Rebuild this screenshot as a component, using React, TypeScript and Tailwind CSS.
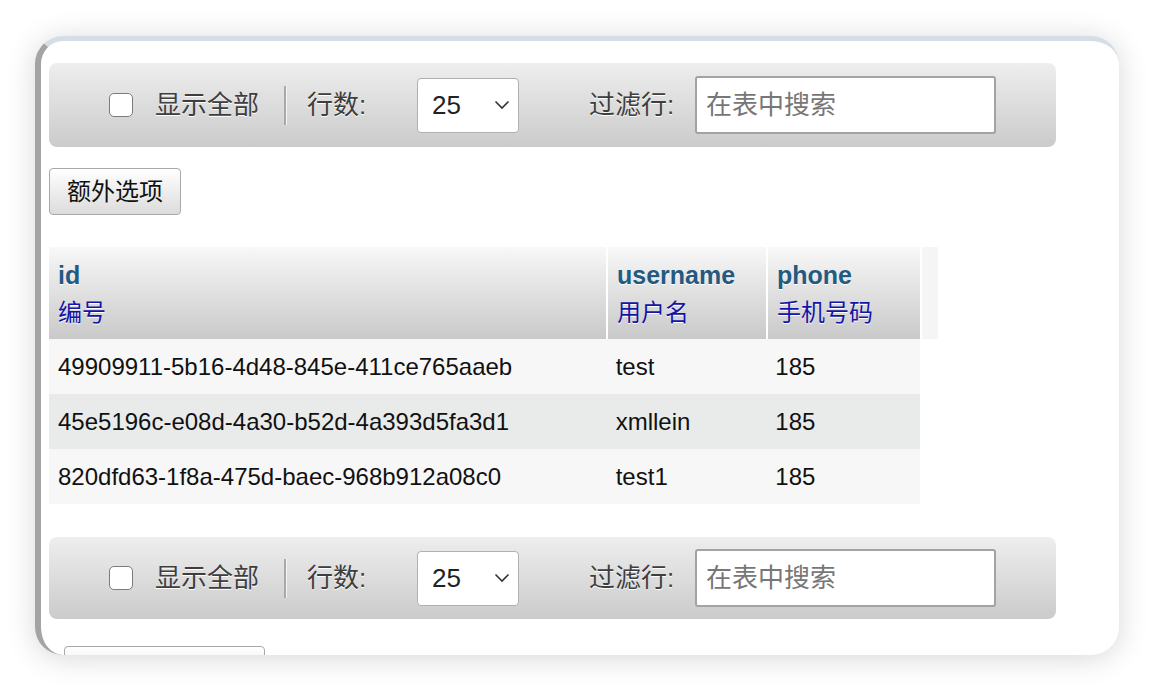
import React from "react";

const font = { fontFamily: '"Liberation Sans", "Noto Sans CJK SC", sans-serif' };

const rows = [
  ["49909911-5b16-4d48-845e-411ce765aaeb", "test", "185"],
  ["45e5196c-e08d-4a30-b52d-4a393d5fa3d1", "xmllein", "185"],
  ["820dfd63-1f8a-475d-baec-968b912a08c0", "test1", "185"],
];

const cols = [
  { name: "id", label: "编号", w: "w-[559px]" },
  { name: "username", label: "用户名", w: "w-[160px]" },
  { name: "phone", label: "手机号码", w: "w-[154px]" },
];

function Chevron() {
  return (
    <svg width="16" height="10" viewBox="0 0 16 10" className="text-[#333]">
      <polyline points="1.5,1.5 8,8 14.5,1.5" fill="none" stroke="currentColor" strokeWidth="1.6" />
    </svg>
  );
}

function Toolbar({ h }: { h: string }) {
  return (
    <div
      className={`flex w-[1007px] ${h} items-center rounded-[8px] bg-gradient-to-b from-[#eeeeee] to-[#cbcbcb] pl-[60px] text-[26px] text-[#3e3e3e] [text-shadow:0_1px_0_#fff]`}
    >
      <span className="h-[24px] w-[24px] shrink-0 rounded-[5px] border-[1.5px] border-[#7c7c7c] bg-white" />
      <span className="ml-[22px] w-[129px] leading-none">显示全部</span>
      <span className="h-[39px] w-[2px] bg-[#a9a9a9] shadow-[1px_0_0_#f4f4f4]" />
      <span className="ml-[21px] w-[110px] leading-none">行数:</span>
      <div className="flex h-[55px] w-[102px] items-center justify-between rounded-[4px] border-[1.5px] border-[#b0b0b0] bg-white pl-[14px] pr-[8px] text-[#222] [text-shadow:none]">
        <span className="leading-none">25</span>
        <Chevron />
      </div>
      <span className="ml-[70px] w-[106px] leading-none">过滤行:</span>
      <div className="flex h-[58px] w-[301px] items-center rounded-[3px] border-2 border-[#a3a3a3] bg-white pl-[9px] text-[#777] [text-shadow:none]">
        <span className="leading-none">在表中搜索</span>
      </div>
    </div>
  );
}

export default function App() {
  return (
    <div className="h-[692px] w-[1156px] overflow-hidden bg-white pl-[35px] pt-[36px]" style={font}>
      <div className="h-[619px] w-[1084px] overflow-hidden rounded-[28px] border-l-[6px] border-t-[5px] border-l-[#a4a4a4] border-t-[#d5dde6] bg-white pl-[8px] pt-[22px] shadow-[0_3px_30px_rgba(0,0,0,0.16)]">
        <Toolbar h="h-[84px]" />

        <button className="mt-[21px] flex h-[47px] w-[132px] items-center justify-center rounded-[4px] border border-[#a8a8a8] bg-gradient-to-b from-[#ffffff] to-[#dcdcdc] text-[24px] leading-none text-[#111]">
          额外选项
        </button>

        {/* results table */}
        <div className="mt-[32px]">
          <div className="flex h-[92px]">
            {cols.map((c) => (
              <div
                key={c.name}
                className={`${c.w} flex flex-col gap-[10px] border-r-2 border-white bg-gradient-to-b from-[#f8f8f8] to-[#c9c9c9] pl-[9px] pt-[14px] [text-shadow:0_1px_0_#fff]`}
              >
                <span className="text-[25px] font-bold leading-[28px] text-[#235a81]">{c.name}</span>
                <span className="text-[24px] leading-[28px] text-[#1414a6]">{c.label}</span>
              </div>
            ))}
            <div className="w-[16px] bg-[#f5f5f5]" />
          </div>
          {rows.map((r, i) => (
            <div
              key={r[0]}
              className={`flex h-[55px] w-[871px] items-center text-[24px] text-[#111] ${i % 2 === 1 ? "bg-[#e9ebea]" : "bg-[#f7f7f7]"}`}
            >
              {r.map((v, j) => (
                <span key={j} className={`${cols[j].w} pl-[9px] leading-none`}>
                  {v}
                </span>
              ))}
            </div>
          ))}
        </div>

        <div className="mt-[33px]">
          <Toolbar h="h-[82px]" />
        </div>

        <div className="ml-[15px] mt-[27px] h-[47px] w-[201px] rounded-[4px] border border-[#a8a8a8] bg-gradient-to-b from-[#ffffff] to-[#dcdcdc]" />
      </div>
    </div>
  );
}
